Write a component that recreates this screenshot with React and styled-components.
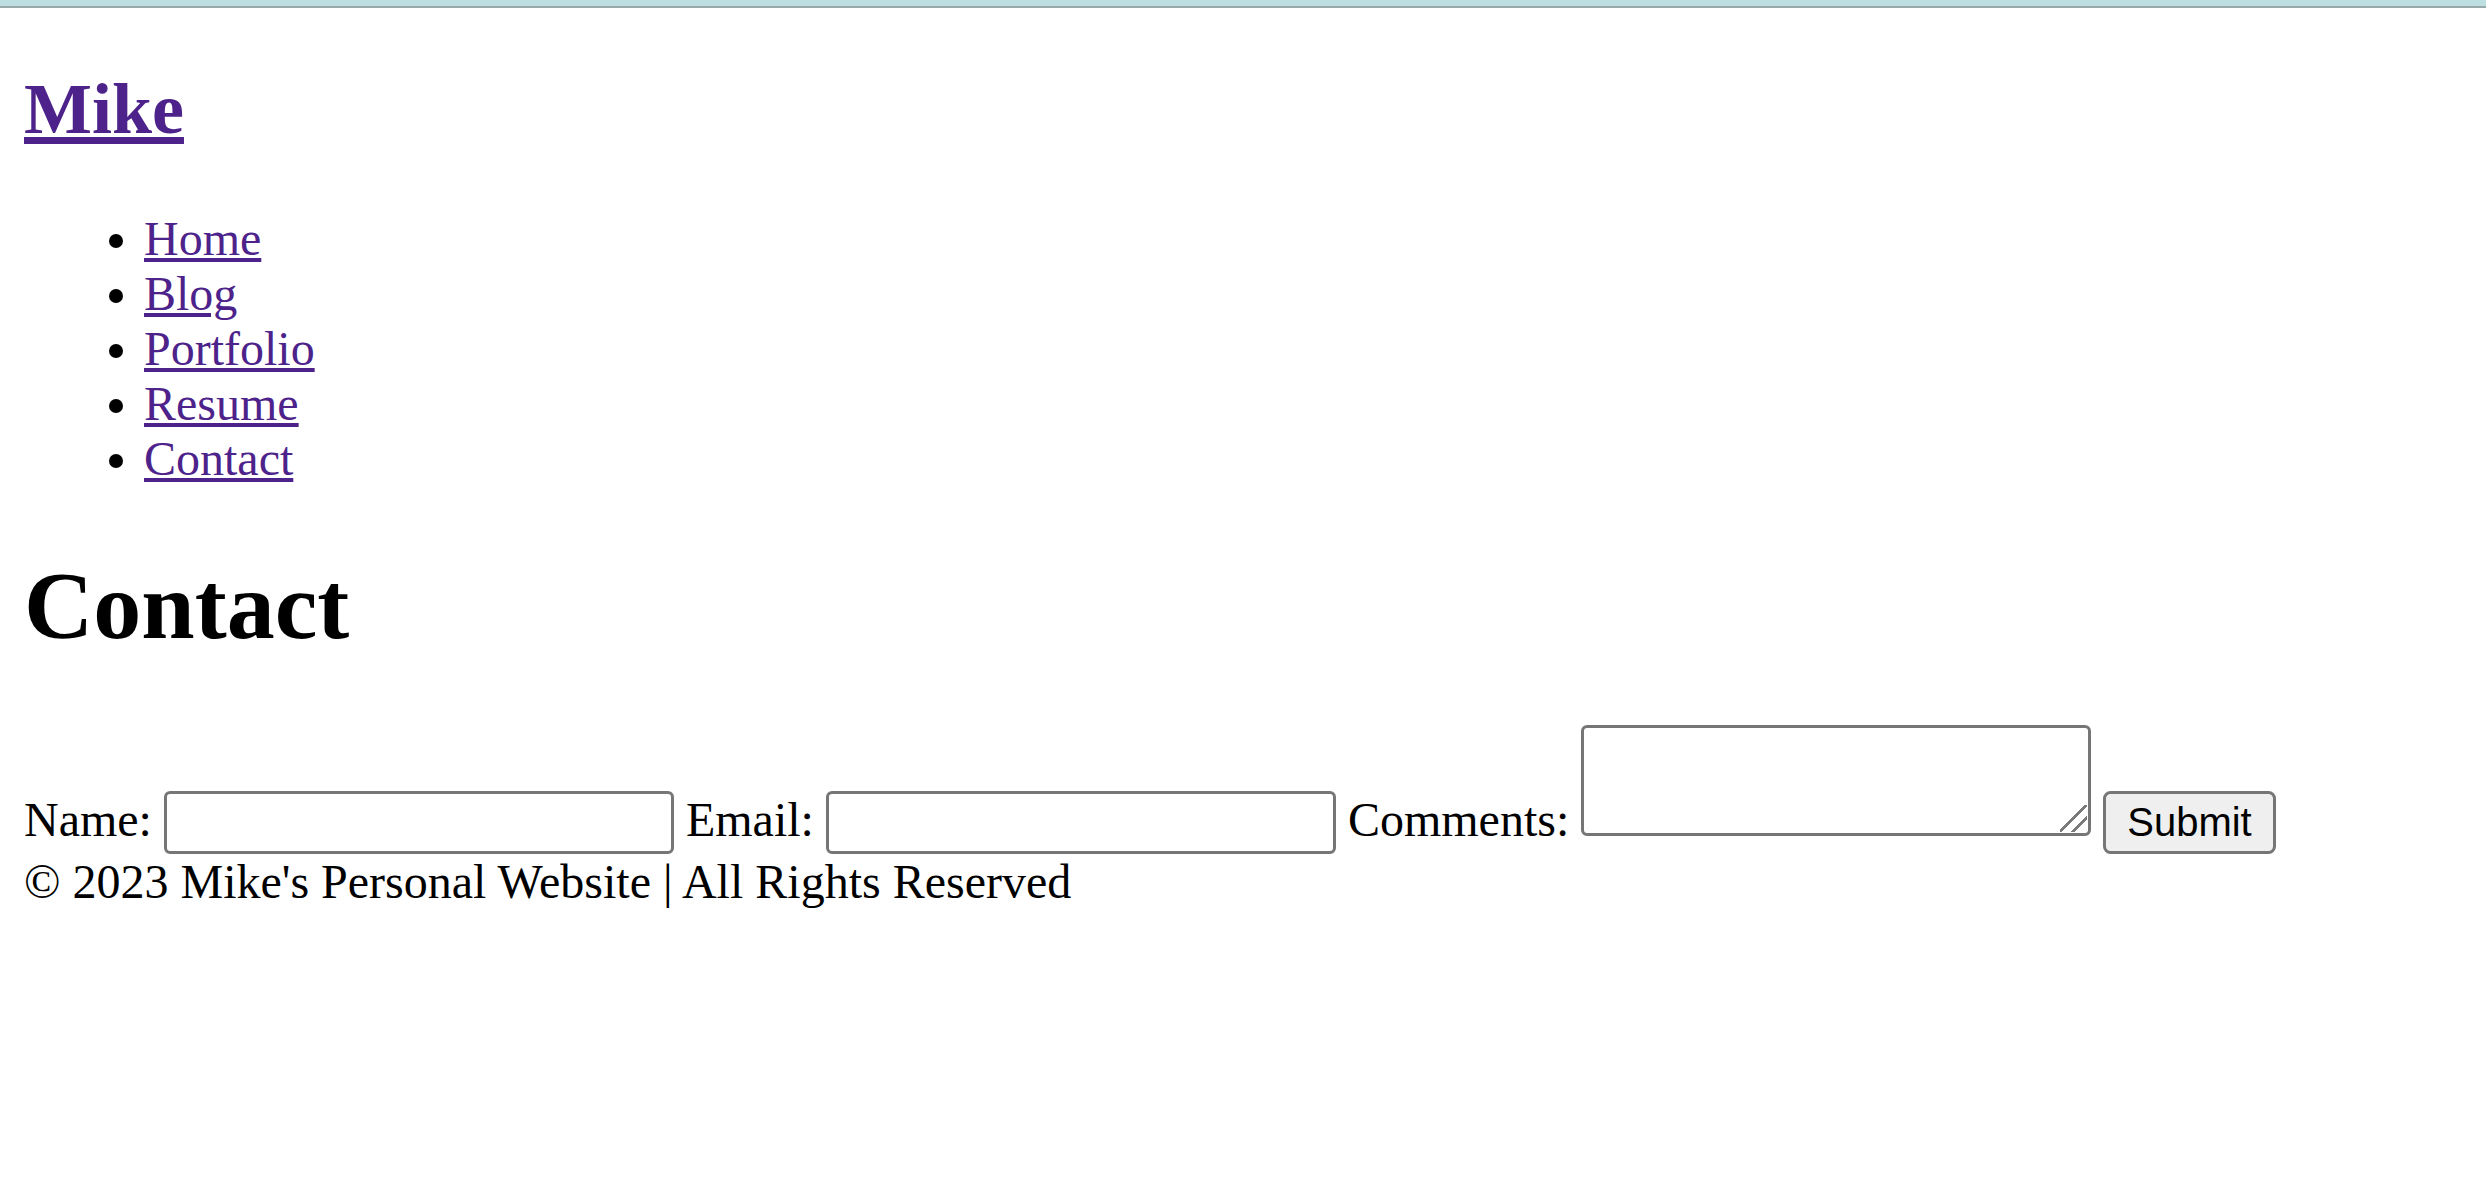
import styled, { createGlobalStyle } from "styled-components";

const GlobalStyle = createGlobalStyle`
  html, body {
    margin: 0;
    padding: 0;
    background: #ffffff;
  }

  body {
    font-family: "Liberation Serif", "Times New Roman", serif;
    color: #000000;
  }
`;

// thin window edge across the top of the shot
const TopEdge = styled.div`
  height: 6px;
  background: #bedfe2;
  border-bottom: 2px solid #97a9aa;
`;

// the page was taken at 300% browser zoom
const Page = styled.div`
  zoom: 3;
  margin: 0 8px 8px;
  font-size: 16px;
`;

const SiteTitle = styled.h2`
  font-size: 1.5em;
  font-weight: bold;
  margin: 0.83em 0;
`;

const Link = styled.a`
  color: #4d238b;
  text-decoration: underline;
`;

const NavList = styled.ul`
  list-style: disc;
  margin: 1em 0;
  padding-left: 40px;
`;

const Heading = styled.h1`
  font-size: 2em;
  font-weight: bold;
  margin: 0.67em 0;
`;

const Form = styled.form`
  margin: 0;
`;

const Field = styled.input`
  box-sizing: border-box;
  width: 170px;
  height: 21px;
  padding: 1px 2px;
  border: 1px solid #767676;
  border-radius: 2px;
  font-family: Arial, "Liberation Sans", sans-serif;
  font-size: 13.333px;
  margin: 0;
  vertical-align: baseline;
`;

// native grip doesn't scale with zoom, so it is painted as two stripes
const Comments = styled.textarea`
  box-sizing: border-box;
  width: 170px;
  height: 37px;
  padding: 2px;
  border: 1px solid #767676;
  border-radius: 2px;
  font-family: monospace;
  font-size: 13.333px;
  margin: 0;
  resize: none;
  background-color: #ffffff;
  background-image: linear-gradient(
    135deg,
    transparent 0 46%,
    #7a7a7a 46% 53%,
    transparent 53% 69%,
    #7a7a7a 69% 76%,
    transparent 76%
  );
  background-repeat: no-repeat;
  background-size: 9px 9px;
  background-position: right 0.5px bottom 0.5px;
`;

const SubmitButton = styled.button`
  font-family: Arial, "Liberation Sans", sans-serif;
  font-size: 13.333px;
  margin: 0;
`;

const Footer = styled.footer`
  margin: 0;
`;

const links = ["Home", "Blog", "Portfolio", "Resume", "Contact"];

export default function App() {
  return (
    <>
      <GlobalStyle />
      <TopEdge />
      <Page>
        <header>
          <SiteTitle>
            <Link href="#">Mike</Link>
          </SiteTitle>
          <nav>
            <NavList>
              {links.map((l) => (
                <li key={l}>
                  <Link href="#">{l}</Link>
                </li>
              ))}
            </NavList>
          </nav>
        </header>

        <main>
          <Heading>Contact</Heading>
          <Form onSubmit={(e) => e.preventDefault()}>
            <label htmlFor="name">Name:</label> <Field type="text" id="name" />{" "}
            <label htmlFor="email">Email:</label> <Field type="email" id="email" />{" "}
            <label htmlFor="comments">Comments:</label> <Comments id="comments" />{" "}
            <SubmitButton type="submit">Submit</SubmitButton>
          </Form>
        </main>

        <Footer>© 2023 Mike's Personal Website | All Rights Reserved</Footer>
      </Page>
    </>
  );
}
